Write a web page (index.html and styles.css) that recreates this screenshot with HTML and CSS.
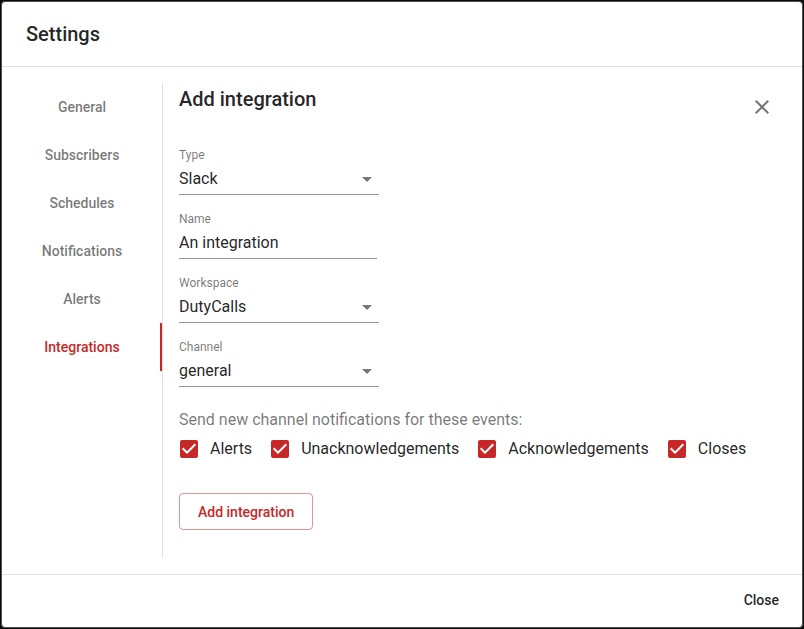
FILE: index.html
```html
<!DOCTYPE html>
<html lang="en">
<head>
  <meta charset="utf-8">
  <meta name="viewport" content="width=device-width, initial-scale=1">
  <title>Settings</title>
  <link rel="stylesheet" href="styles.css">
</head>
<body>
  <main class="dialog" role="dialog" aria-labelledby="dialog-title">
    <header class="dialog-header">
      <h1 class="heading" id="dialog-title">Settings</h1>
    </header>
    <div class="dialog-body">
      <nav class="tabs" aria-label="Settings sections">
        <button class="tab" type="button">General</button>
        <button class="tab" type="button">Subscribers</button>
        <button class="tab" type="button">Schedules</button>
        <button class="tab" type="button">Notifications</button>
        <button class="tab" type="button">Alerts</button>
        <button class="tab tab-active" type="button" aria-current="page">Integrations</button>
      </nav>
      <section class="panel" aria-labelledby="panel-title">
        <div class="panel-header">
          <h2 class="heading" id="panel-title">Add integration</h2>
          <button class="icon-button" type="button" aria-label="Cancel">
            <svg class="icon" viewBox="0 0 24 24" aria-hidden="true"><path d="M19 6.41L17.59 5 12 10.59 6.41 5 5 6.41 10.59 12 5 17.59 6.41 19 12 13.41 17.59 19 19 17.59 13.41 12z"/></svg>
          </button>
        </div>
        <form class="form">
          <div class="field">
            <label class="field-label" for="type">Type</label>
            <div class="select">
              <select class="control" id="type"><option>Slack</option></select>
              <svg class="icon select-arrow" viewBox="0 0 24 24" aria-hidden="true"><path d="M7 10l5 5 5-5z"/></svg>
            </div>
          </div>
          <div class="field field-text">
            <label class="field-label" for="name">Name</label>
            <input class="control" id="name" type="text" value="An integration">
          </div>
          <div class="field">
            <label class="field-label" for="workspace">Workspace</label>
            <div class="select">
              <select class="control" id="workspace"><option>DutyCalls</option></select>
              <svg class="icon select-arrow" viewBox="0 0 24 24" aria-hidden="true"><path d="M7 10l5 5 5-5z"/></svg>
            </div>
          </div>
          <div class="field">
            <label class="field-label" for="channel">Channel</label>
            <div class="select">
              <select class="control" id="channel"><option>general</option></select>
              <svg class="icon select-arrow" viewBox="0 0 24 24" aria-hidden="true"><path d="M7 10l5 5 5-5z"/></svg>
            </div>
          </div>
          <fieldset class="events">
            <legend class="events-title">Send new channel notifications for these events:</legend>
            <div class="events-row">
              <label class="check"><span class="check-box"><input class="check-input" type="checkbox" checked><svg class="check-mark" viewBox="3 3 18 18" aria-hidden="true"><path d="M10 17l-5-5 1.41-1.41L10 14.17l7.59-7.59L19 8z"/></svg></span>Alerts</label>
              <label class="check"><span class="check-box"><input class="check-input" type="checkbox" checked><svg class="check-mark" viewBox="3 3 18 18" aria-hidden="true"><path d="M10 17l-5-5 1.41-1.41L10 14.17l7.59-7.59L19 8z"/></svg></span>Unacknowledgements</label>
              <label class="check"><span class="check-box"><input class="check-input" type="checkbox" checked><svg class="check-mark" viewBox="3 3 18 18" aria-hidden="true"><path d="M10 17l-5-5 1.41-1.41L10 14.17l7.59-7.59L19 8z"/></svg></span>Acknowledgements</label>
              <label class="check"><span class="check-box"><input class="check-input" type="checkbox" checked><svg class="check-mark" viewBox="3 3 18 18" aria-hidden="true"><path d="M10 17l-5-5 1.41-1.41L10 14.17l7.59-7.59L19 8z"/></svg></span>Closes</label>
            </div>
          </fieldset>
          <button class="button button-outlined" type="button">Add integration</button>
        </form>
      </section>
    </div>
    <footer class="dialog-footer">
      <button class="button" type="button">Close</button>
    </footer>
  </main>
</body>
</html>
```

FILE: styles.css
```css
:root {
  --text: rgba(0, 0, 0, 0.87);
  --muted: rgba(0, 0, 0, 0.54);
  --divider: #e0e0e0;
  --accent: #c62828;
}

* {
  box-sizing: border-box;
}

body {
  display: flex;
  min-height: 100vh;
  margin: 0;
  padding: 1px;
  background: #0c0c0c;
  color: var(--text);
  font: 16px/24px Roboto, "Liberation Sans", sans-serif;
}

button,
input,
select {
  margin: 0;
  color: inherit;
  font: inherit;
}

.dialog {
  display: flex;
  flex: 1;
  flex-direction: column;
  border: 1px solid #4d4d4d;
  border-radius: 4px;
  background: #fff;
}

.dialog-header {
  padding: 16px 24px;
  border-bottom: 1px solid var(--divider);
}

.heading {
  margin: 0;
  font-size: 20px;
  font-weight: 500;
  line-height: 32px;
}

.dialog-body {
  display: flex;
  flex: 1;
  padding: 16px 16px 16px 0;
}

.tabs {
  display: flex;
  flex: none;
  flex-direction: column;
  width: 161px;
  border-right: 1px solid var(--divider);
}

.tab {
  height: 48px;
  padding: 0;
  border: 0;
  border-left: 2px solid transparent;
  border-right: 2px solid transparent;
  background: none;
  color: var(--muted);
  font-size: 14px;
  font-weight: 500;
}

.tab-active {
  border-right-color: var(--accent);
  color: var(--accent);
}

.panel {
  flex: 1;
  padding-left: 16px;
}

.panel-header {
  display: flex;
  justify-content: space-between;
  margin-bottom: 16px;
}

.icon-button {
  padding: 12px;
  border: 0;
  background: none;
  color: var(--muted);
}

.icon {
  display: block;
  width: 24px;
  height: 24px;
  fill: currentColor;
}

.form {
  display: flex;
  flex-direction: column;
  align-items: flex-start;
  gap: 16px;
}

.field {
  width: 200px;
}

.field-text {
  width: 198px;
}

.field-label {
  display: block;
  color: var(--muted);
  font-size: 12px;
  line-height: 16px;
}

.control {
  display: block;
  width: 100%;
  height: 32px;
  padding: 0;
  border: 0;
  border-bottom: 1px solid #949494;
  border-radius: 0;
  outline: 0;
  appearance: none;
  background: none;
}

.select {
  position: relative;
}

.select-arrow {
  position: absolute;
  top: 4px;
  right: 0;
  color: var(--muted);
  pointer-events: none;
}

.events {
  margin: 5px 0 11px;
  padding: 0;
  border: 0;
}

.events-title {
  padding: 0;
  color: var(--muted);
}

.events-row {
  display: flex;
  flex-wrap: wrap;
  gap: 19px;
  padding: 5px 1px;
}

.check {
  display: flex;
  align-items: center;
  gap: 12px;
}

.check-box {
  display: grid;
}

.check-input,
.check-mark {
  grid-area: 1 / 1;
  width: 18px;
  height: 18px;
}

.check-input {
  appearance: none;
  border: 2px solid var(--muted);
  border-radius: 2px;
}

.check-input:checked {
  border-color: var(--accent);
  background: var(--accent);
}

.check-mark {
  fill: #fff;
  pointer-events: none;
}

.button {
  padding: 6px 8px;
  border: 0;
  border-radius: 4px;
  background: none;
  font-size: 14px;
  font-weight: 500;
}

.button-outlined {
  min-height: 37px;
  padding: 5px 18px;
  border: 1px solid rgba(198, 40, 40, 0.5);
  color: var(--accent);
}

.dialog-footer {
  display: flex;
  justify-content: flex-end;
  padding: 7px 15px 9px;
  border-top: 1px solid var(--divider);
}
```
